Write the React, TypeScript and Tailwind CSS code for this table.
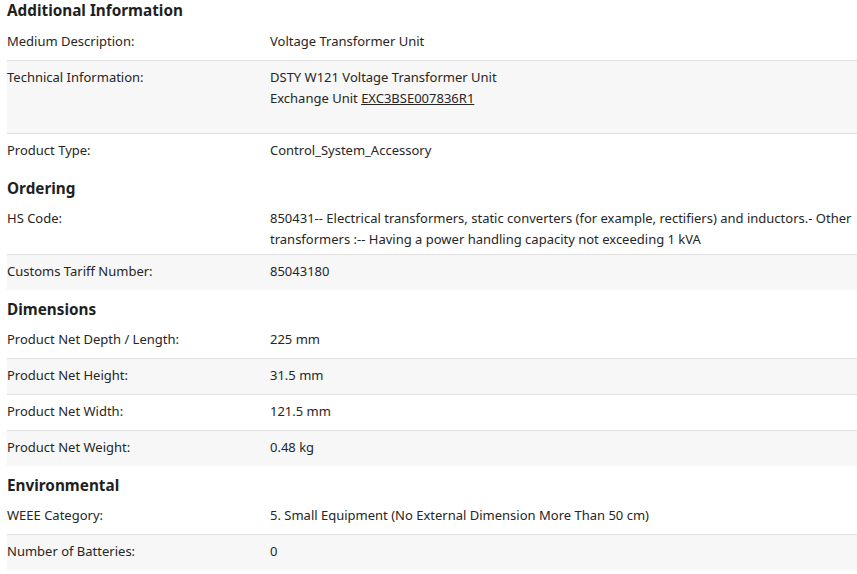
import React from "react";

type Row = { label: string; value: React.ReactNode; pb?: string };
type Section = { title: string; rows: Row[] };

const sections: Section[] = [
  {
    title: "Additional Information",
    rows: [
      { label: "Medium Description:", value: "Voltage Transformer Unit" },
      {
        label: "Technical Information:",
        pb: "pb-[24px]",
        value: (
          <>
            DSTY W121 Voltage Transformer Unit
            <br />
            Exchange Unit <a className="underline">EXC3BSE007836R1</a>
          </>
        ),
      },
      { label: "Product Type:", value: "Control_System_Accessory" },
    ],
  },
  {
    title: "Ordering",
    rows: [
      {
        label: "HS Code:",
        pb: "pb-[4px]",
        value:
          "850431-- Electrical transformers, static converters (for example, rectifiers) and inductors.- Other transformers :-- Having a power handling capacity not exceeding 1 kVA",
      },
      { label: "Customs Tariff Number:", value: "85043180" },
    ],
  },
  {
    title: "Dimensions",
    rows: [
      { label: "Product Net Depth / Length:", value: "225 mm" },
      { label: "Product Net Height:", value: "31.5 mm" },
      { label: "Product Net Width:", value: "121.5 mm" },
      { label: "Product Net Weight:", value: "0.48 kg" },
    ],
  },
  {
    title: "Environmental",
    rows: [
      { label: "WEEE Category:", value: "5. Small Equipment (No External Dimension More Than 50 cm)" },
      { label: "Number of Batteries:", value: "0" },
    ],
  },
];

export default function App() {
  return (
    <div
      className="w-[857px] bg-white pl-[7px] text-[13px] leading-[21px] text-[#262626]"
      style={{ fontFamily: '"Noto Sans", "Open Sans", sans-serif' }}
    >
      {sections.map((s, si) => (
        <div key={s.title} className={si === 0 ? "" : "mt-[7px]"}>
          <h3
            className={
              (si === 0 ? "h-[24px] pt-0 " : "h-[25px] pt-[2px] ") +
              "text-[15.3px] font-bold leading-[20px] text-[#1f1f1f]"
            }
          >
            {s.title}
          </h3>
          {s.rows.map((r, ri) => (
            <div
              key={r.label}
              className={
                "grid grid-cols-[263px_1fr] border-t pt-[6px] " +
                (r.pb ? r.pb + " " : "pb-[8px] ") +
                (ri % 2 === 1 ? "bg-[#f7f7f7] " : "bg-white ") +
                (ri === 0 ? "border-transparent" : "border-[#e0e0e0]")
              }
            >
              <div>{r.label}</div>
              <div>{r.value}</div>
            </div>
          ))}
        </div>
      ))}
    </div>
  );
}
